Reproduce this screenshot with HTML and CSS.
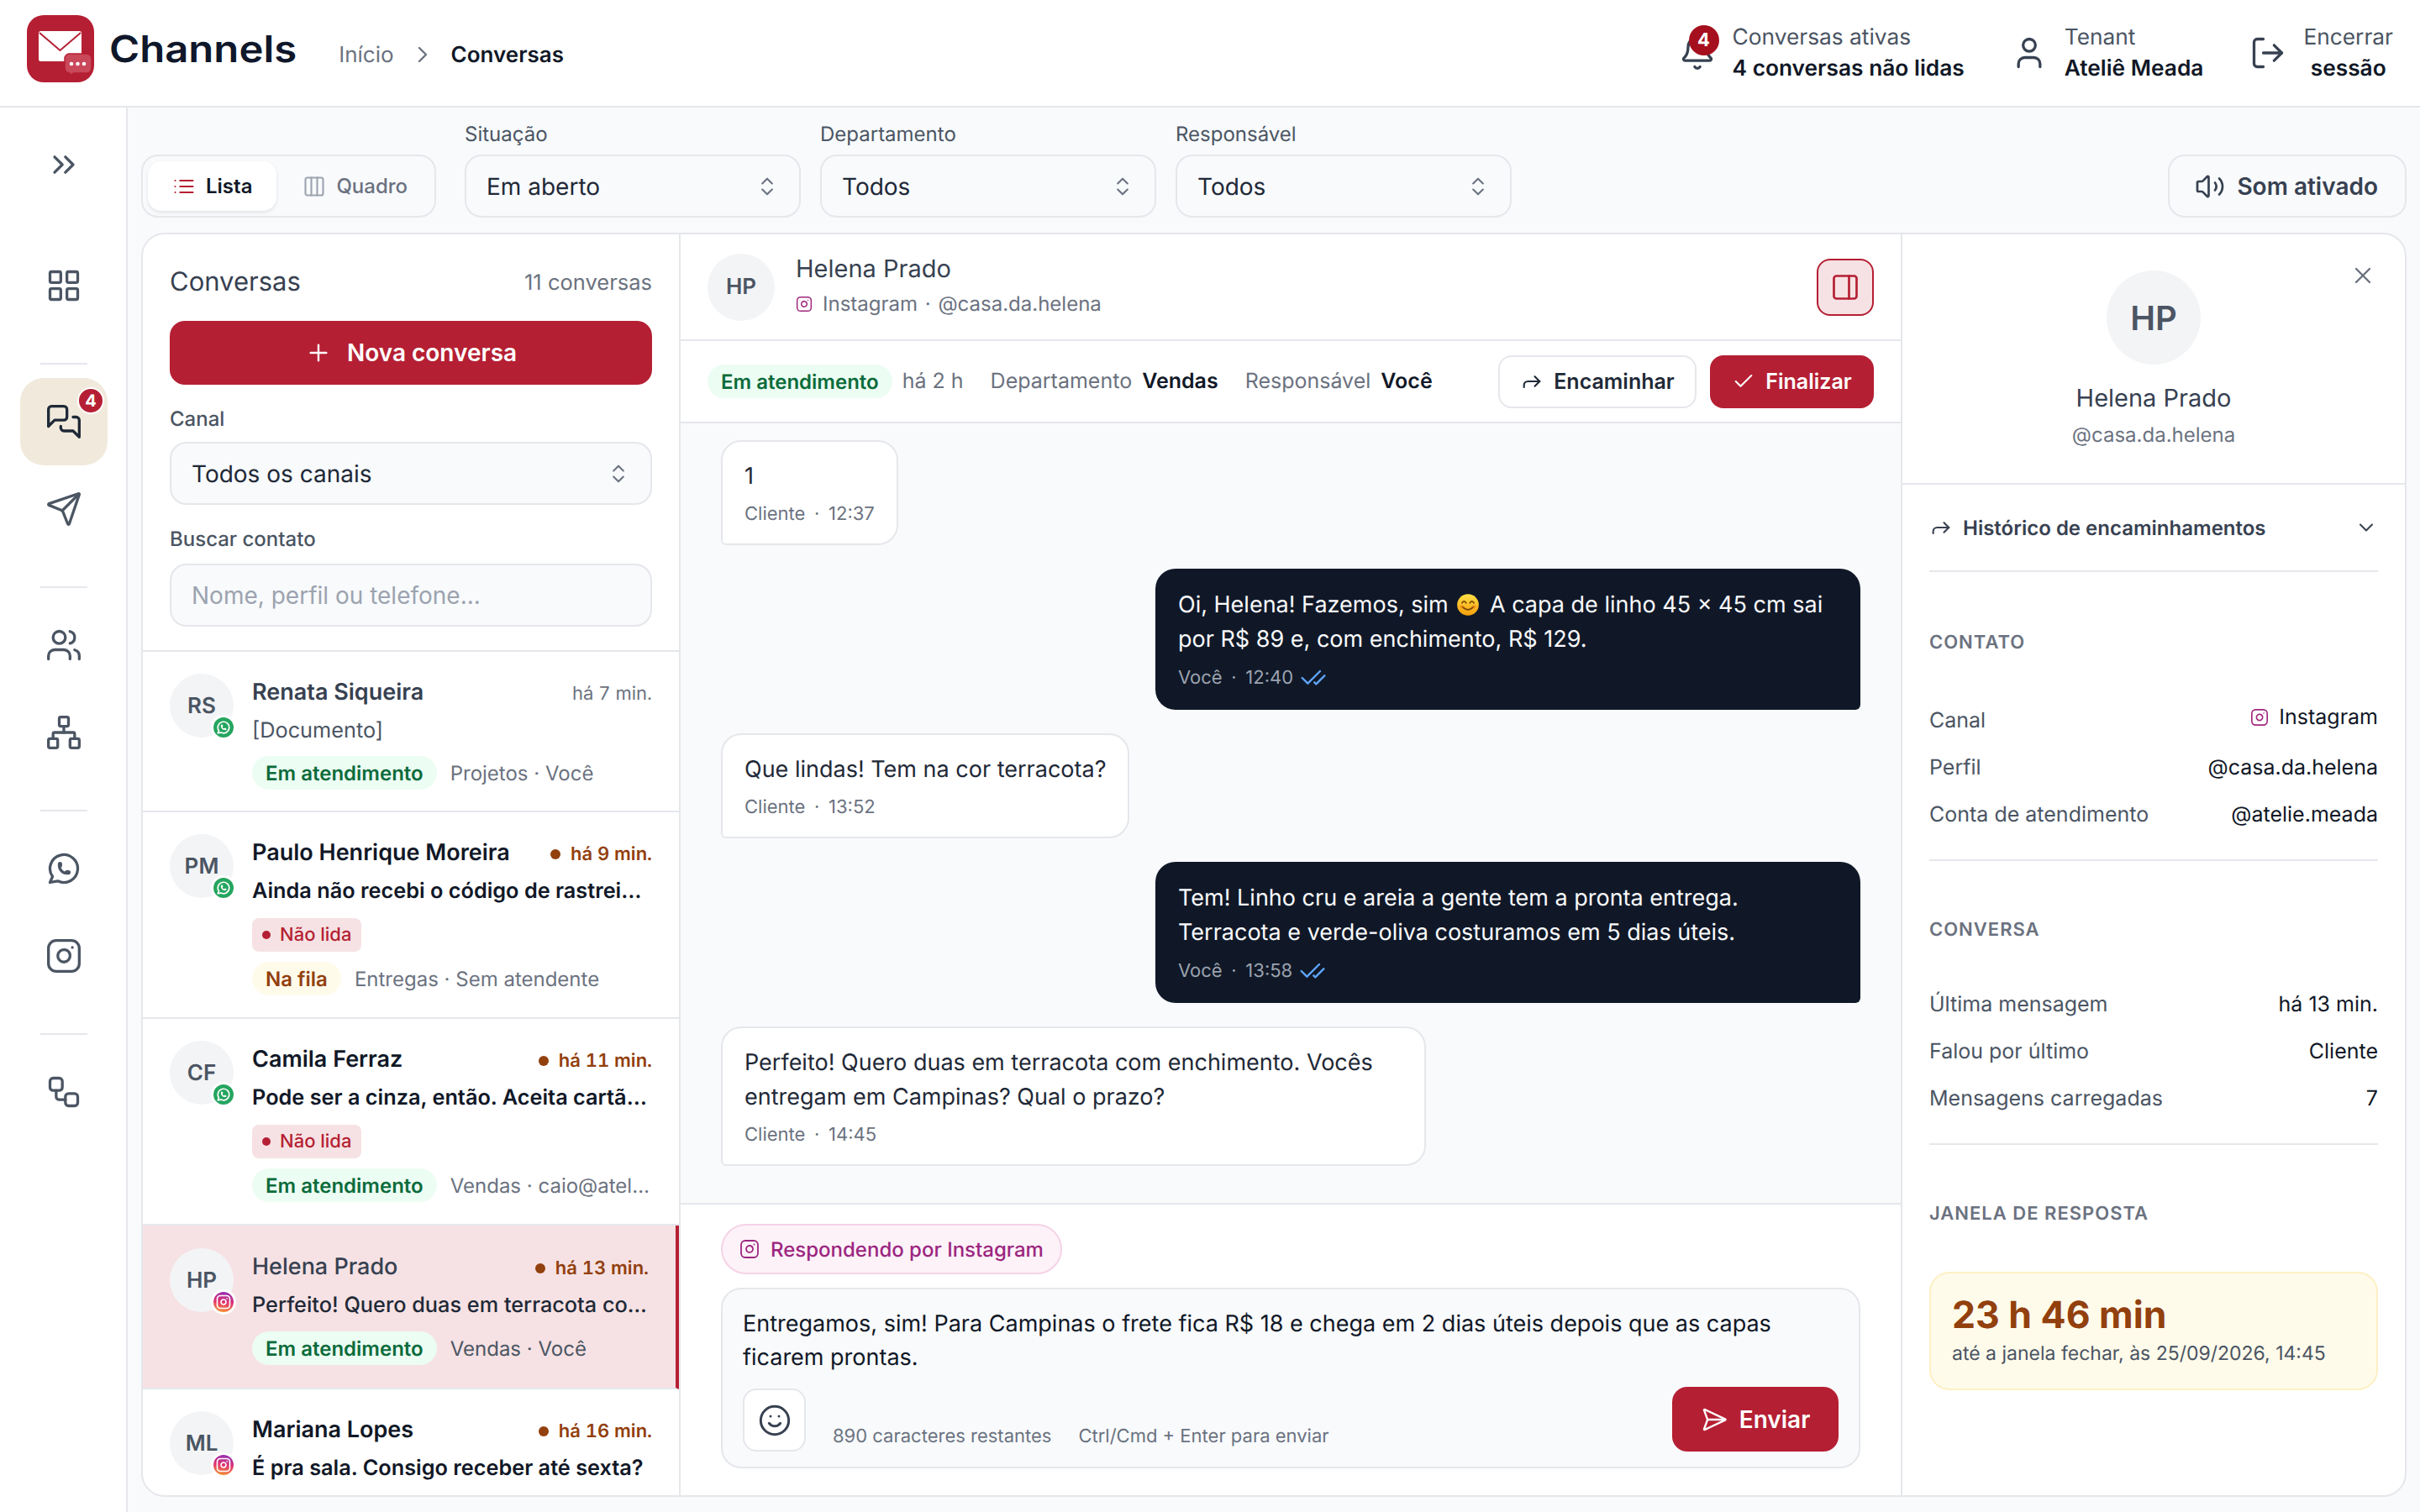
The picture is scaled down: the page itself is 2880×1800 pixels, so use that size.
FILE: index.html
```html
<!DOCTYPE html>
<html lang="pt-BR">
<head>
  <meta charset="UTF-8" />
  <meta name="viewport" content="width=device-width, initial-scale=1.0"/>
  <title>Channels - Conversas</title>
  <link rel="stylesheet" href="styles.css">
</head>
<body>

  <!-- icon set, reused below with <use> -->
  <svg class="sprite" aria-hidden="true">
    <symbol id="i-chevrons-right" viewBox="0 0 24 24"><path d="m6 17 5-5-5-5"/><path d="m13 17 5-5-5-5"/></symbol>
    <symbol id="i-grid" viewBox="0 0 24 24"><rect width="7" height="7" x="3" y="3" rx="1"/><rect width="7" height="7" x="14" y="3" rx="1"/><rect width="7" height="7" x="14" y="14" rx="1"/><rect width="7" height="7" x="3" y="14" rx="1"/></symbol>
    <symbol id="i-messages" viewBox="0 0 24 24"><path d="M14 9a2 2 0 0 1-2 2H6l-4 4V4a2 2 0 0 1 2-2h8a2 2 0 0 1 2 2z"/><path d="M18 9h2a2 2 0 0 1 2 2v11l-4-4h-6a2 2 0 0 1-2-2v-1"/></symbol>
    <symbol id="i-send" viewBox="0 0 24 24"><path d="M14.536 21.686a.5.5 0 0 0 .937-.024l6.5-19a.496.496 0 0 0-.635-.635l-19 6.5a.5.5 0 0 0-.024.937l7.93 3.18a2 2 0 0 1 1.112 1.11z"/><path d="m21.854 2.147-10.94 10.939"/></symbol>
    <symbol id="i-send-h" viewBox="0 0 24 24"><path d="M3.714 3.048a.498.498 0 0 0-.683.627l2.843 7.627a2 2 0 0 1 0 1.396l-2.842 7.627a.498.498 0 0 0 .682.627l18-8.5a.5.5 0 0 0 0-.904z"/><path d="M6 12h16"/></symbol>
    <symbol id="i-users" viewBox="0 0 24 24"><path d="M16 21v-2a4 4 0 0 0-4-4H6a4 4 0 0 0-4 4v2"/><path d="M16 3.128a4 4 0 0 1 0 7.744"/><path d="M22 21v-2a4 4 0 0 0-3-3.87"/><circle cx="9" cy="7" r="4"/></symbol>
    <symbol id="i-network" viewBox="0 0 24 24"><rect x="16" y="16" width="6" height="6" rx="1"/><rect x="2" y="16" width="6" height="6" rx="1"/><rect x="9" y="2" width="6" height="6" rx="1"/><path d="M5 16v-3a1 1 0 0 1 1-1h12a1 1 0 0 1 1 1v3"/><path d="M12 12V8"/></symbol>
    <symbol id="i-whatsapp" viewBox="0 0 24 24"><path d="M3 21l1.65-3.8a9 9 0 1 1 3.4 2.9L3 21"/><path d="M9 10a.5.5 0 0 0 1 0V9a.5.5 0 0 0-1 0v1a5 5 0 0 0 5 5h1a.5.5 0 0 0 0-1h-1a.5.5 0 0 0 0 1"/></symbol>
    <symbol id="i-instagram" viewBox="0 0 24 24"><rect width="20" height="20" x="2" y="2" rx="5" ry="5"/><path d="M16 11.37A4 4 0 1 1 12.63 8 4 4 0 0 1 16 11.37z"/><line x1="17.5" x2="17.51" y1="6.5" y2="6.5"/></symbol>
    <symbol id="i-workflow" viewBox="0 0 24 24"><rect width="8" height="8" x="3" y="3" rx="2"/><path d="M7 11v4a2 2 0 0 0 2 2h4"/><rect width="8" height="8" x="13" y="13" rx="2"/></symbol>
    <symbol id="i-bell" viewBox="0 0 24 24"><path d="M10.268 21a2 2 0 0 0 3.464 0"/><path d="M3.262 15.326A1 1 0 0 0 4 17h16a1 1 0 0 0 .74-1.673C19.41 13.956 18 12.499 18 8A6 6 0 0 0 6 8c0 4.499-1.411 5.956-2.738 7.326"/></symbol>
    <symbol id="i-user" viewBox="0 0 24 24"><path d="M19 21v-2a4 4 0 0 0-4-4H9a4 4 0 0 0-4 4v2"/><circle cx="12" cy="7" r="4"/></symbol>
    <symbol id="i-logout" viewBox="0 0 24 24"><path d="m16 17 5-5-5-5"/><path d="M21 12H9"/><path d="M9 21H5a2 2 0 0 1-2-2V5a2 2 0 0 1 2-2h4"/></symbol>
    <symbol id="i-list" viewBox="0 0 24 24"><path d="M3 12h.01"/><path d="M3 18h.01"/><path d="M3 6h.01"/><path d="M8 12h13"/><path d="M8 18h13"/><path d="M8 6h13"/></symbol>
    <symbol id="i-columns" viewBox="0 0 24 24"><rect width="18" height="18" x="3" y="3" rx="2"/><path d="M9 3v18"/><path d="M15 3v18"/></symbol>
    <symbol id="i-updown" viewBox="0 0 24 24"><path d="m7 15 5 5 5-5"/><path d="m7 9 5-5 5 5"/></symbol>
    <symbol id="i-volume" viewBox="0 0 24 24"><path d="M11 4.702a.705.705 0 0 0-1.203-.498L6.413 7.587A1.4 1.4 0 0 1 5.416 8H3a1 1 0 0 0-1 1v6a1 1 0 0 0 1 1h2.416a1.4 1.4 0 0 1 .997.413l3.383 3.384A.705.705 0 0 0 11 19.298z"/><path d="M16 9a5 5 0 0 1 0 6"/><path d="M19.364 18.364a9 9 0 0 0 0-12.728"/></symbol>
    <symbol id="i-panel" viewBox="0 0 24 24"><rect width="18" height="18" x="3" y="3" rx="2"/><path d="M15 3v18"/></symbol>
    <symbol id="i-forward" viewBox="0 0 24 24"><path d="m15 17 5-5-5-5"/><path d="M4 18v-2a4 4 0 0 1 4-4h12"/></symbol>
    <symbol id="i-check" viewBox="0 0 24 24"><path d="M20 6 9 17l-5-5"/></symbol>
    <symbol id="i-check2" viewBox="0 0 24 24"><path d="M18 6 7 17l-5-5"/><path d="m22 10-7.5 7.5L13 16"/></symbol>
    <symbol id="i-plus" viewBox="0 0 24 24"><path d="M5 12h14"/><path d="M12 5v14"/></symbol>
    <symbol id="i-x" viewBox="0 0 24 24"><path d="M18 6 6 18"/><path d="m6 6 12 12"/></symbol>
    <symbol id="i-down" viewBox="0 0 24 24"><path d="m6 9 6 6 6-6"/></symbol>
    <symbol id="i-right" viewBox="0 0 24 24"><path d="m9 18 6-6-6-6"/></symbol>
    <symbol id="i-smile" viewBox="0 0 24 24"><circle cx="12" cy="12" r="10"/><path d="M8 14s1.5 2 4 2 4-2 4-2"/><path d="M9 9h.01"/><path d="M15 9h.01"/></symbol>
  </svg>

  <div class="app">

    <header class="topbar">
      <div class="brand">
        <svg class="logo" viewBox="0 0 80 80">
          <rect width="80" height="80" rx="20" fill="#b51f33"/>
          <rect x="14" y="19" width="51" height="36" rx="2.5" fill="#fff"/>
          <path d="M15 21 39.500 42 64 21" fill="none" stroke="#b51f33" stroke-width="2"/>
          <path d="M50 46h21a6 6 0 0 1 6 6v11a6 6 0 0 1-6 6H56l-6 3 1-3a6 6 0 0 1-6-6V52a6 6 0 0 1 5-6z" fill="#c9485a" stroke="#b51f33" stroke-width="1.500"/>
          <circle cx="53" cy="58" r="2.300" fill="#fff"/><circle cx="60.500" cy="58" r="2.300" fill="#fff"/><circle cx="68" cy="58" r="2.300" fill="#fff"/>
        </svg>
        <span class="brand-name">Channels</span>
      </div>
      <nav class="crumbs">
        <span>Início</span>
        <svg class="ic crumb-sep"><use href="#i-right"/></svg>
        <strong>Conversas</strong>
      </nav>
      <div class="top-actions">
        <div class="top-item">
          <span class="bell">
            <svg class="ic top-ic"><use href="#i-bell"/></svg>
            <span class="bell-count">4</span>
          </span>
          <div class="top-text"><span>Conversas ativas</span><strong>4 conversas não lidas</strong></div>
        </div>
        <div class="top-item">
          <svg class="ic top-ic"><use href="#i-user"/></svg>
          <div class="top-text"><span>Tenant</span><strong>Ateliê Meada</strong></div>
        </div>
        <div class="top-item">
          <svg class="ic top-ic"><use href="#i-logout"/></svg>
          <div class="top-text is-center"><span>Encerrar</span><strong>sessão</strong></div>
        </div>
      </div>
    </header>

    <div class="shell">

      <aside class="sidebar">
        <a class="side-btn side-first"><svg class="ic"><use href="#i-chevrons-right"/></svg></a>
        <a class="side-btn"><svg class="ic"><use href="#i-grid"/></svg></a>
        <hr class="side-line">
        <a class="side-btn is-active">
          <svg class="ic"><use href="#i-messages"/></svg>
          <span class="side-count">4</span>
        </a>
        <a class="side-btn"><svg class="ic"><use href="#i-send"/></svg></a>
        <hr class="side-line">
        <a class="side-btn"><svg class="ic"><use href="#i-users"/></svg></a>
        <a class="side-btn"><svg class="ic"><use href="#i-network"/></svg></a>
        <hr class="side-line">
        <a class="side-btn"><svg class="ic"><use href="#i-whatsapp"/></svg></a>
        <a class="side-btn"><svg class="ic"><use href="#i-instagram"/></svg></a>
        <hr class="side-line">
        <a class="side-btn"><svg class="ic"><use href="#i-workflow"/></svg></a>
      </aside>

      <main class="main">

        <div class="toolbar">
          <div class="segment">
            <button class="seg-btn is-on"><svg class="ic"><use href="#i-list"/></svg>Lista</button>
            <button class="seg-btn"><svg class="ic"><use href="#i-columns"/></svg>Quadro</button>
          </div>
          <div class="field">
            <label>Situação</label>
            <div class="select">Em aberto<svg class="ic"><use href="#i-updown"/></svg></div>
          </div>
          <div class="field">
            <label>Departamento</label>
            <div class="select">Todos<svg class="ic"><use href="#i-updown"/></svg></div>
          </div>
          <div class="field">
            <label>Responsável</label>
            <div class="select">Todos<svg class="ic"><use href="#i-updown"/></svg></div>
          </div>
          <button class="sound"><svg class="ic"><use href="#i-volume"/></svg>Som ativado</button>
        </div>

        <div class="panel">

          <section class="col-list">
            <div class="list-head">
              <div class="list-title">
                <h2>Conversas</h2>
                <span>11 conversas</span>
              </div>
              <button class="btn-new"><svg class="ic"><use href="#i-plus"/></svg>Nova conversa</button>
              <label class="list-label">Canal</label>
              <div class="select">Todos os canais<svg class="ic"><use href="#i-updown"/></svg></div>
              <label class="list-label">Buscar contato</label>
              <input class="search" type="text" placeholder="Nome, perfil ou telefone...">
            </div>

            <div class="rows">
              <article class="row">
                <div class="avatar">RS<span class="chan is-wa"><svg class="ic"><use href="#i-whatsapp"/></svg></span></div>
                <div class="row-body">
                  <div class="row-top"><span class="row-name">Renata Siqueira</span><span class="row-time">há 7 min.</span></div>
                  <p class="row-text">[Documento]</p>
                  <div class="row-tags"><span class="tag is-green">Em atendimento</span><span class="row-meta">Projetos · Você</span></div>
                </div>
              </article>

              <article class="row is-unread">
                <div class="avatar">PM<span class="chan is-wa"><svg class="ic"><use href="#i-whatsapp"/></svg></span></div>
                <div class="row-body">
                  <div class="row-top"><span class="row-name">Paulo Henrique Moreira</span><span class="row-time">há 9 min.</span></div>
                  <p class="row-text">Ainda não recebi o código de rastreio da minha encomenda</p>
                  <div class="row-tags is-flag"><span class="flag">Não lida</span></div>
                  <div class="row-tags"><span class="tag is-amber">Na fila</span><span class="row-meta">Entregas · Sem atendente</span></div>
                </div>
              </article>

              <article class="row is-unread">
                <div class="avatar">CF<span class="chan is-wa"><svg class="ic"><use href="#i-whatsapp"/></svg></span></div>
                <div class="row-body">
                  <div class="row-top"><span class="row-name">Camila Ferraz</span><span class="row-time">há 11 min.</span></div>
                  <p class="row-text">Pode ser a cinza, então. Aceita cartão de crédito?</p>
                  <div class="row-tags is-flag"><span class="flag">Não lida</span></div>
                  <div class="row-tags"><span class="tag is-green">Em atendimento</span><span class="row-meta">Vendas · caio@atelie.meada</span></div>
                </div>
              </article>

              <article class="row is-selected">
                <div class="avatar">HP<span class="chan is-ig"><svg class="ic"><use href="#i-instagram"/></svg></span></div>
                <div class="row-body">
                  <div class="row-top"><span class="row-name">Helena Prado</span><span class="row-time is-late">há 13 min.</span></div>
                  <p class="row-text">Perfeito! Quero duas em terracota com enchimento.</p>
                  <div class="row-tags"><span class="tag is-green">Em atendimento</span><span class="row-meta">Vendas · Você</span></div>
                </div>
              </article>

              <article class="row is-unread">
                <div class="avatar">ML<span class="chan is-ig"><svg class="ic"><use href="#i-instagram"/></svg></span></div>
                <div class="row-body">
                  <div class="row-top"><span class="row-name">Mariana Lopes</span><span class="row-time">há 16 min.</span></div>
                  <p class="row-text">É pra sala. Consigo receber até sexta?</p>
                  <div class="row-tags is-flag"><span class="flag">Não lida</span></div>
                </div>
              </article>
            </div>
          </section>

          <section class="col-chat">
            <div class="chat-head">
              <div class="avatar is-chat">HP</div>
              <div class="chat-who">
                <span class="chat-name">Helena Prado</span>
                <span class="chat-sub"><svg class="ic"><use href="#i-instagram"/></svg>Instagram · @casa.da.helena</span>
              </div>
              <button class="panel-toggle"><svg class="ic"><use href="#i-panel"/></svg></button>
            </div>

            <div class="chat-status">
              <span class="tag is-green">Em atendimento</span>
              <span class="status-age">há 2 h</span>
              <span class="status-pair">Departamento <b>Vendas</b></span>
              <span class="status-pair">Responsável <b>Você</b></span>
              <button class="btn-line"><svg class="ic"><use href="#i-forward"/></svg>Encaminhar</button>
              <button class="btn-red"><svg class="ic"><use href="#i-check"/></svg>Finalizar</button>
            </div>

            <div class="messages">
              <div class="bubble">
                <p>1</p>
                <span class="bubble-meta">Cliente · 12:37</span>
              </div>
              <div class="bubble is-me">
                <p>Oi, Helena! Fazemos, sim
                  <svg class="emoji" viewBox="0 0 24 24">
                    <defs><linearGradient id="face" x1="0" y1="0" x2="0" y2="1"><stop offset="0" stop-color="#fde047"/><stop offset="1" stop-color="#f59e0b"/></linearGradient></defs>
                    <circle cx="12" cy="12" r="11" fill="url(#face)"/>
                    <path d="M6 10q2-3 4 0M14 10q2-3 4 0" fill="none" stroke="#7c4a03" stroke-width="1.600" stroke-linecap="round"/>
                    <path d="M6.500 14q5.500 6 11 0" fill="none" stroke="#7c4a03" stroke-width="1.600" stroke-linecap="round"/>
                    <circle cx="5.500" cy="14" r="1.800" fill="#f97316" opacity=".5"/><circle cx="18.500" cy="14" r="1.800" fill="#f97316" opacity=".5"/>
                  </svg>
                  A capa de linho 45 × 45 cm sai<br>por R$ 89 e, com enchimento, R$ 129.</p>
                <span class="bubble-meta">Você · 12:40 <svg class="ic ticks"><use href="#i-check2"/></svg></span>
              </div>
              <div class="bubble">
                <p>Que lindas! Tem na cor terracota?</p>
                <span class="bubble-meta">Cliente · 13:52</span>
              </div>
              <div class="bubble is-me">
                <p>Tem! Linho cru e areia a gente tem a pronta entrega. Terracota e verde-oliva costuramos em 5 dias úteis.</p>
                <span class="bubble-meta">Você · 13:58 <svg class="ic ticks"><use href="#i-check2"/></svg></span>
              </div>
              <div class="bubble">
                <p>Perfeito! Quero duas em terracota com enchimento. Vocês entregam em Campinas? Qual o prazo?</p>
                <span class="bubble-meta">Cliente · 14:45</span>
              </div>
            </div>

            <div class="composer">
              <span class="reply-chip"><svg class="ic"><use href="#i-instagram"/></svg>Respondendo por Instagram</span>
              <div class="compose-box">
                <p>Entregamos, sim! Para Campinas o frete fica R$ 18 e chega em 2 dias úteis depois que as capas ficarem prontas.</p>
                <div class="compose-tools">
                  <button class="emoji-btn"><svg class="ic"><use href="#i-smile"/></svg></button>
                  <span class="hint">890 caracteres restantes</span>
                  <span class="hint">Ctrl/Cmd + Enter para enviar</span>
                  <button class="btn-send"><svg class="ic"><use href="#i-send-h"/></svg>Enviar</button>
                </div>
              </div>
            </div>
          </section>

          <section class="col-info">
            <div class="info-head">
              <svg class="ic info-close"><use href="#i-x"/></svg>
              <div class="avatar is-big">HP</div>
              <span class="info-name">Helena Prado</span>
              <span class="info-handle">@casa.da.helena</span>
            </div>
            <div class="info-body">
              <div class="history">
                <svg class="ic"><use href="#i-forward"/></svg>
                <span>Histórico de encaminhamentos</span>
                <svg class="ic history-arrow"><use href="#i-down"/></svg>
              </div>

              <div class="info-sec">
                <h3>Contato</h3>
                <div class="pair is-channel"><span>Canal</span><b><svg class="ic"><use href="#i-instagram"/></svg>Instagram</b></div>
                <div class="pair"><span>Perfil</span><b>@casa.da.helena</b></div>
                <div class="pair"><span>Conta de atendimento</span><b>@atelie.meada</b></div>
              </div>

              <div class="info-sec">
                <h3>Conversa</h3>
                <div class="pair"><span>Última mensagem</span><b>há 13 min.</b></div>
                <div class="pair"><span>Falou por último</span><b>Cliente</b></div>
                <div class="pair"><span>Mensagens carregadas</span><b>7</b></div>
              </div>

              <div class="info-sec is-last">
                <h3>Janela de resposta</h3>
                <div class="window-card">
                  <strong>23 h 46 min</strong>
                  <span>até a janela fechar, às 25/09/2026, 14:45</span>
                </div>
              </div>
            </div>
          </section>

        </div>
      </main>
    </div>
  </div>

</body>
</html>
```
FILE: styles.css
```css
* {
  box-sizing: border-box;
}

body {
  margin: 0;
  font-family: Inter, "Noto Sans", sans-serif;
  font-size: 25px;
  color: #111827;
  background-color: #f8fafc;
  text-rendering: geometricPrecision;
}

p, h2, h3 {
  margin: 0;
  font-weight: 400;
}

button {
  font-family: inherit;
  cursor: pointer;
}

.sprite {
  display: none;
}

.ic {
  width: 44px;
  height: 44px;
  flex: none;
  fill: none;
  stroke: currentColor;
  stroke-width: 1.8;
  stroke-linecap: round;
  stroke-linejoin: round;
}

.app {
  display: flex;
  flex-direction: column;
  width: 2880px;
  height: 1800px;
  overflow: hidden;
}

/* top bar */
.topbar {
  display: flex;
  align-items: center;
  flex: none;
  height: 128px;
  padding: 0 32px;
  background-color: #fff;
  border-bottom: 2px solid #e5e7eb;
}

.brand {
  display: flex;
  align-items: center;
  gap: 18px;
  margin-bottom: 10px;
}

.logo {
  width: 80px;
  height: 80px;
}

/* the wordmark is wider than any installed face */
.brand-name {
  margin-right: 23px;
  font-size: 44px;
  font-weight: 600;
  color: #0f172a;
  transform: scaleX(1.115);
  transform-origin: left center;
}

.crumbs {
  display: flex;
  align-items: center;
  gap: 18px;
  margin: 4px 0 0 50px;
  font-size: 26px;
  color: #6b7280;
}

.crumbs strong {
  color: #111827;
  font-weight: 600;
}

.crumb-sep {
  width: 32px;
  height: 32px;
  color: #6b7280;
}

.top-actions {
  display: flex;
  align-items: center;
  gap: 55px;
  margin-left: auto;
}

.top-item {
  display: flex;
  align-items: center;
  gap: 20px;
}

.top-ic {
  color: #374151;
}

.bell {
  position: relative;
  display: flex;
}

.bell-count {
  position: absolute;
  left: 12px;
  top: -11px;
  width: 36px;
  height: 36px;
  border-radius: 50%;
  background-color: #a50f1e;
  color: #fff;
  font-size: 22px;
  font-weight: 700;
  line-height: 36px;
  text-align: center;
}

.top-text {
  display: flex;
  flex-direction: column;
  font-size: 26.3px;
  line-height: 37px;
  color: #4b5563;
}

.top-text strong {
  color: #111827;
  font-weight: 600;
}

.top-text.is-center {
  text-align: center;
}

/* side navigation */
.shell {
  display: flex;
  flex: 1;
  min-height: 0;
}

.sidebar {
  display: flex;
  flex-direction: column;
  align-items: center;
  flex: none;
  width: 152px;
  padding: 16px 0 0 2px;
  background-color: #fff;
  border-right: 2px solid #e5e7eb;
}

.side-btn {
  position: relative;
  display: flex;
  align-items: center;
  justify-content: center;
  flex: none;
  width: 104px;
  height: 104px;
  border-radius: 28px;
  color: #4b5563;
}

.side-first {
  margin-bottom: 40px;
}

.side-btn.is-active {
  background-color: #f1eadc;
  color: #1f2937;
}

.side-count {
  position: absolute;
  top: 11px;
  right: 4px;
  width: 32px;
  height: 32px;
  border: 2px solid #fff;
  border-radius: 50%;
  background-color: #b51f33;
  color: #fff;
  font-size: 20px;
  font-weight: 700;
  line-height: 28px;
  text-align: center;
}

.side-line {
  flex: none;
  width: 56px;
  height: 2px;
  margin: 40px 0 16px;
  border: 0;
  background-color: #e5e7eb;
}

/* filters row */
.main {
  display: flex;
  flex-direction: column;
  flex: 1;
  min-width: 0;
  padding: 16px 16px 18px 16px;
}

.toolbar {
  display: flex;
  align-items: flex-end;
  flex: none;
  margin-bottom: 18px;
}

.segment {
  display: flex;
  gap: 2px;
  width: 351px;
  height: 75px;
  padding: 6px;
  margin-right: 34px;
  background-color: #f8fafc;
  border: 2px solid #e5e7eb;
  border-radius: 20px;
}

.seg-btn {
  display: flex;
  align-items: center;
  gap: 12px;
  padding: 0 29px;
  border: 0;
  border-radius: 16px;
  background: none;
  color: #6b7280;
  font-size: 24px;
  font-weight: 500;
}

.seg-btn .ic {
  width: 28px;
  height: 28px;
  color: #9ca3af;
}

.seg-btn.is-on {
  background-color: #fff;
  color: #111827;
  font-weight: 600;
  box-shadow: 0 2px 4px rgba(15, 23, 42, 0.1);
}

.seg-btn.is-on .ic {
  color: #b51f33;
}

.field {
  width: 400px;
  margin-right: 23px;
}

.field label {
  display: block;
  height: 32px;
  margin-bottom: 8px;
  font-size: 24px;
  line-height: 32px;
  color: #4b5563;
}

.select {
  display: flex;
  align-items: center;
  justify-content: space-between;
  height: 75px;
  padding: 0 24px;
  background-color: #f8fafc;
  border: 2px solid #e5e7eb;
  border-radius: 20px;
  font-size: 28px;
  color: #1f2937;
}

.select .ic {
  width: 28px;
  height: 28px;
  color: #6b7280;
}

.sound {
  display: flex;
  align-items: center;
  gap: 14px;
  height: 75px;
  padding: 0 32px 0 30px;
  margin-left: auto;
  background-color: #f8fafc;
  border: 2px solid #e5e7eb;
  border-radius: 20px;
  color: #374151;
  font-size: 28px;
  font-weight: 600;
}

.sound .ic {
  width: 36px;
  height: 36px;
}

/* the three-column card */
.panel {
  display: grid;
  grid-template-columns: 640px 1454px 1fr;
  flex: 1;
  min-height: 0;
  background-color: #fff;
  border: 2px solid #e5e7eb;
  border-radius: 28px;
  overflow: hidden;
}

.col-list,
.col-chat {
  display: flex;
  flex-direction: column;
  min-height: 0;
  border-right: 2px solid #e5e7eb;
}

.list-head {
  flex: none;
  padding: 36px 32px 28px;
  border-bottom: 2px solid #e5e7eb;
}

.list-title {
  display: flex;
  align-items: center;
  justify-content: space-between;
  height: 40px;
  margin-bottom: 27px;
  color: #6b7280;
}

.list-title span {
  padding-top: 2px;
  font-size: 25.5px;
}

.list-title h2 {
  font-size: 31px;
  color: #374151;
}

.btn-new {
  display: flex;
  align-items: center;
  justify-content: center;
  gap: 18px;
  width: 100%;
  height: 76px;
  border: 0;
  border-radius: 18px;
  background-color: #b51f33;
  color: #fff;
  font-size: 28px;
  font-weight: 600;
}

.btn-new .ic {
  width: 32px;
  height: 32px;
}

.list-label {
  display: block;
  height: 32px;
  margin: 25px 0 11px;
  font-size: 24px;
  line-height: 32px;
  font-weight: 500;
  color: #4b5563;
}

.search {
  display: block;
  width: 100%;
  height: 75px;
  padding: 0 24px;
  margin-top: 13px;
  background-color: #f8fafc;
  border: 2px solid #e5e7eb;
  border-radius: 20px;
  font-family: inherit;
  font-size: 28px;
  color: #1f2937;
}

.search::placeholder {
  color: #9ca3af;
}

.rows {
  flex: 1;
  min-height: 0;
  overflow: hidden;
}

.row {
  display: flex;
  gap: 22px;
  padding: 26px 32px 25px;
  border-bottom: 2px solid #e5e7eb;
}

.row.is-unread {
  padding-bottom: 26px;
}

.avatar {
  position: relative;
  display: flex;
  align-items: center;
  justify-content: center;
  flex: none;
  width: 76px;
  height: 76px;
  border-radius: 50%;
  background-color: #f3f4f6;
  color: #4b5563;
  font-size: 26px;
  font-weight: 600;
}

.chan {
  position: absolute;
  right: -3px;
  bottom: -3px;
  display: flex;
  align-items: center;
  justify-content: center;
  width: 30px;
  height: 30px;
  border: 3px solid #fff;
  border-radius: 50%;
  color: #fff;
}

.chan .ic {
  width: 18px;
  height: 18px;
  stroke-width: 2.2;
}

.chan.is-wa {
  background-color: #25a55f;
}

.chan.is-ig {
  background: linear-gradient(190deg, #8a2fc0 0%, #e0316f 50%, #f9a12e 100%);
}

.row-body {
  flex: 1;
  min-width: 0;
}

.row-top {
  display: flex;
  align-items: center;
  justify-content: space-between;
  height: 42px;
}

.row-name {
  font-size: 27px;
  font-weight: 600;
  color: #374151;
}

.row-time {
  margin-top: 5px;
  font-size: 22px;
  font-variant-numeric: tabular-nums;
  color: #6b7280;
}

.row-text {
  height: 40px;
  margin-top: 6px;
  font-size: 25.3px;
  line-height: 40px;
  color: #4b5563;
  white-space: nowrap;
  overflow: hidden;
  text-overflow: ellipsis;
}

.row-tags {
  display: flex;
  align-items: center;
  gap: 16px;
  height: 40px;
  margin-top: 10px;
}

.row-tags.is-flag {
  margin-top: 12px;
}

.row-tags + .row-tags {
  margin-top: 12px;
}

.tag {
  display: inline-flex;
  align-items: center;
  flex: none;
  height: 40px;
  padding: 0 16px;
  border-radius: 20px;
  font-size: 24px;
  font-weight: 600;
}

.tag.is-green {
  background-color: #ecfdf3;
  color: #0b6b3b;
}

.tag.is-amber {
  background-color: #fffbeb;
  color: #92400e;
}

.row-meta {
  min-width: 0;
  font-size: 24px;
  color: #6b7280;
  white-space: nowrap;
  overflow: hidden;
  text-overflow: ellipsis;
}

.flag {
  display: inline-flex;
  align-items: center;
  gap: 11px;
  height: 40px;
  padding: 0 12px;
  border-radius: 8px;
  background-color: #f6e2e4;
  color: #b51f33;
  font-size: 22px;
  font-weight: 500;
}

.flag::before {
  content: '';
  width: 10px;
  height: 10px;
  border-radius: 50%;
  background-color: #b51f33;
}

.is-unread .row-name {
  color: #111827;
}

.is-unread .row-text {
  font-weight: 600;
  color: #111827;
}

.is-unread .row-time,
.row-time.is-late {
  display: inline-flex;
  align-items: center;
  gap: 12px;
  font-weight: 600;
  color: #92400e;
}

.is-unread .row-time::before,
.row-time.is-late::before {
  content: '';
  width: 12px;
  height: 12px;
  border-radius: 50%;
  background-color: #92400e;
}

.row.is-selected {
  padding: 27px 32px 27px 32px;
  background-color: #f6e2e4;
  border-right: 4px solid #b51f33;
}

.is-selected .row-name {
  font-weight: 500;
}

.is-selected .row-text {
  font-weight: 500;
  color: #1f2937;
}

.is-selected .row-tags {
  margin-top: 11px;
}

.is-selected .row-meta {
  color: #4b5563;
}

/* chat column */
.chat-head {
  display: flex;
  align-items: center;
  flex: none;
  gap: 25px;
  height: 127px;
  padding: 0 32px;
  border-bottom: 2px solid #e5e7eb;
}

.avatar.is-chat {
  width: 80px;
  height: 80px;
}

.chat-who {
  display: flex;
  flex-direction: column;
  gap: 4px;
  padding-bottom: 4px;
}

.chat-name {
  font-size: 29px;
  line-height: 40px;
  color: #374151;
}

.chat-sub {
  display: flex;
  align-items: center;
  gap: 12px;
  font-size: 24px;
  line-height: 36px;
  word-spacing: 2px;
  color: #6b7280;
}

.chat-sub .ic {
  width: 20px;
  height: 20px;
  color: #a0267f;
}

.panel-toggle {
  display: flex;
  align-items: center;
  justify-content: center;
  width: 68px;
  height: 68px;
  margin-left: auto;
  padding: 0;
  background-color: #f6e2e4;
  border: 2px solid #b51f33;
  border-radius: 16px;
  color: #b51f33;
}

.panel-toggle .ic {
  width: 36px;
  height: 36px;
}

.chat-status {
  display: flex;
  align-items: center;
  flex: none;
  height: 98px;
  padding: 0 32px;
  border-bottom: 2px solid #e5e7eb;
  color: #6b7280;
}

.status-age {
  margin: 0 32px 0 12px;
}

.status-pair {
  margin-right: 32px;
}

.status-pair b {
  margin-left: 5px;
  color: #111827;
  font-weight: 600;
}

.btn-line,
.btn-red {
  display: flex;
  align-items: center;
  justify-content: center;
  gap: 12px;
  height: 63px;
  border-radius: 16px;
  font-size: 25px;
  font-weight: 600;
}

.btn-line .ic,
.btn-red .ic {
  width: 28px;
  height: 28px;
}

.btn-line {
  width: 236px;
  margin-left: auto;
  background-color: #fff;
  border: 2px solid #e5e7eb;
  color: #1f2937;
}

.btn-red {
  width: 195px;
  margin-left: 16px;
  background-color: #b51f33;
  border: 0;
  color: #fff;
}

.messages {
  display: flex;
  flex-direction: column;
  align-items: flex-start;
  flex: 1;
  gap: 28px;
  min-height: 0;
  padding: 20px 48px;
  background-color: #f8fafc;
  overflow: hidden;
}

.bubble {
  max-width: 839px;
  padding: 20px 26px 18px;
  background-color: #fff;
  border: 2px solid #e5e7eb;
  border-radius: 24px 24px 24px 6px;
  color: #1f2937;
}

.bubble p {
  font-size: 27px;
  line-height: 41px;
}

.bubble-meta {
  display: flex;
  align-items: center;
  gap: 8px;
  height: 34px;
  margin-top: 8px;
  font-size: 22px;
  word-spacing: 4.5px;
  color: #6b7280;
}

.bubble.is-me {
  align-self: flex-end;
  width: 839px;
  padding: 22px 27px 21px;
  background-color: #101828;
  border: 0;
  border-radius: 24px 24px 6px 24px;
  color: #f9fafb;
}

.bubble.is-me .bubble-meta {
  margin-top: 9px;
  color: #9ca3af;
}

.emoji {
  width: 28px;
  height: 28px;
  margin: 0 4px 0 2px;
  vertical-align: -5px;
}

.ticks {
  width: 32px;
  height: 32px;
  color: #60a5fa;
}

.composer {
  flex: none;
  padding: 23px 48px 32px;
  border-top: 2px solid #e5e7eb;
}

.reply-chip {
  display: inline-flex;
  align-items: center;
  gap: 13px;
  height: 60px;
  padding: 0 20px;
  background-color: #fdf2f8;
  border: 2px solid #f5d3e6;
  border-radius: 30px;
  font-size: 24px;
  font-weight: 500;
  color: #9b2680;
}

.reply-chip .ic {
  width: 24px;
  height: 24px;
}

.compose-box {
  height: 215px;
  margin-top: 16px;
  padding: 21px 24px 20px;
  background-color: #f8fafc;
  border: 2px solid #e5e7eb;
  border-radius: 24px;
}

.compose-box p {
  height: 80px;
  font-size: 27px;
  line-height: 40px;
  color: #111827;
}

.compose-tools {
  display: flex;
  align-items: flex-end;
  gap: 32px;
  margin-top: 15px;
}

.emoji-btn {
  display: flex;
  align-items: center;
  justify-content: center;
  width: 75px;
  height: 75px;
  padding: 0;
  background-color: #fff;
  border: 2px solid #e5e7eb;
  border-radius: 16px;
  color: #374151;
}

.emoji-btn .ic {
  width: 40px;
  height: 40px;
}

.hint {
  font-size: 22px;
  line-height: 36px;
  color: #6b7280;
}

.btn-send {
  display: flex;
  align-items: center;
  justify-content: center;
  gap: 14px;
  width: 198px;
  height: 77px;
  margin-left: auto;
  border: 0;
  border-radius: 18px;
  background-color: #b51f33;
  color: #fff;
  font-size: 28px;
  font-weight: 600;
}

.btn-send .ic {
  width: 32px;
  height: 32px;
}

/* contact details column */
.info-head {
  position: relative;
  display: flex;
  flex-direction: column;
  align-items: center;
  height: 298px;
  padding-top: 43px;
  border-bottom: 2px solid #e5e7eb;
}

.info-close {
  position: absolute;
  top: 33px;
  right: 34px;
  width: 32px;
  height: 32px;
  color: #6b7280;
}

.avatar.is-big {
  width: 112px;
  height: 112px;
  font-size: 40px;
}

.info-name {
  margin-top: 20px;
  font-size: 29px;
  line-height: 40px;
  color: #374151;
}

.info-handle {
  margin-top: 6px;
  font-size: 24px;
  line-height: 36px;
  color: #6b7280;
}

.info-body {
  padding: 0 32px;
}

.history {
  display: flex;
  align-items: center;
  gap: 12px;
  height: 104px;
  border-bottom: 2px solid #e5e7eb;
  font-size: 24px;
  font-weight: 600;
  color: #374151;
}

.history .ic {
  width: 28px;
  height: 28px;
}

.history-arrow {
  margin-left: auto;
}

.info-sec {
  padding: 66px 0 33px;
  border-bottom: 2px solid #e5e7eb;
}

.info-sec:nth-of-type(2) {
  padding-top: 68px;
}

.info-sec.is-last {
  border-bottom: 0;
}

.info-sec h3 {
  height: 32px;
  margin-bottom: 53px;
  font-size: 22px;
  font-weight: 600;
  line-height: 32px;
  letter-spacing: 1px;
  text-transform: uppercase;
  color: #6b7280;
}

.pair {
  display: flex;
  justify-content: space-between;
  height: 40px;
  margin-top: 16px;
  line-height: 40px;
  color: #4b5563;
}

.pair b {
  font-weight: 400;
  color: #111827;
}

.info-sec h3 + .pair {
  margin-top: 0;
}

.pair.is-channel {
  height: 44px;
}

.pair.is-channel span {
  align-self: flex-end;
}

.pair.is-channel b {
  display: flex;
  align-items: center;
  align-self: flex-start;
  gap: 12px;
  height: 40px;
}

.pair.is-channel .ic {
  width: 22px;
  height: 22px;
  color: #a0267f;
}

.window-card {
  display: flex;
  flex-direction: column;
  height: 141px;
  padding: 23px 25px 0;
  background-color: #fffbeb;
  border: 2px solid #fdf0c4;
  border-radius: 24px;
}

.window-card strong {
  font-size: 44.5px;
  font-weight: 700;
  line-height: 52px;
  color: #92400e;
}

.window-card span {
  margin-top: 2px;
  font-size: 23px;
  line-height: 36px;
  color: #4b5563;
}
```
